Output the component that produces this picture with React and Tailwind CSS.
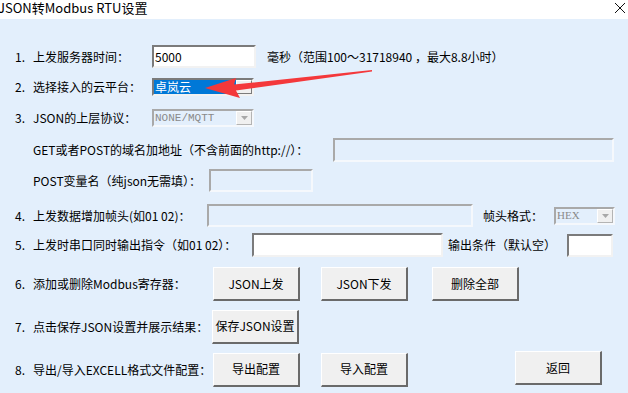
import React from "react";

const font = "font-['Noto_Sans_CJK_SC','Noto_Sans',sans-serif]";
const sunkenWhite =
  "border-2 border-t-[#7b7b7b] border-l-[#7b7b7b] border-b-[#f2f2f2] border-r-[#f2f2f2] bg-white";
const sunkenDisabled =
  "border-2 border-t-[#a9a9a9] border-l-[#a9a9a9] border-b-[#f5f8fc] border-r-[#f5f8fc] bg-[#e3effc]";

function Btn({ children, className = "" }) {
  return (
    <div
      className={`flex items-center justify-center w-[87px] h-[34px] bg-[#f0f0f0] border border-t-white border-l-white border-r-2 border-b-2 border-r-[#6a6a6a] border-b-[#6a6a6a] text-[12px] text-black ${className}`}
    >
      {children}
    </div>
  );
}

function Tri({ color }) {
  return (
    <svg width="7" height="4" viewBox="0 0 7 4">
      <polygon points="0,0 7,0 3.5,4" fill={color} />
    </svg>
  );
}

function Label({ num, children, w }) {
  return (
    <div className="flex items-center shrink-0" style={{ width: w }}>
      <span className="w-[18px] shrink-0">{num}</span>
      <span className="whitespace-nowrap">{children}</span>
    </div>
  );
}

export default function App() {
  return (
    <div className={`relative w-[628px] h-[393px] overflow-hidden bg-[#e3effc] ${font} text-[12px] text-black`}>
      <div className="h-[19px] bg-white flex items-start justify-between">
        <span className="text-[13px] leading-[15px] -ml-[2px] whitespace-nowrap">JSON转Modbus RTU设置</span>
        <svg width="12" height="12" viewBox="0 0 12 12" className="mr-[2px] mt-[2px]">
          <path d="M1 1 L11 11 M11 1 L1 11" stroke="#111" strokeWidth="1" />
        </svg>
      </div>

      <div className="flex flex-col pl-[15px]">
        {/* Row 1 */}
        <div className="flex items-center h-[23px] mt-[26px]">
          <Label num="1." w={137}>上发服务器时间：</Label>
          <div className={`w-[104px] h-[23px] ${sunkenWhite} flex items-center pl-[1px] text-[12px]`}>5000</div>
          <span className="ml-[11px] whitespace-nowrap">毫秒（范围100～31718940 ，最大8.8小时）</span>
        </div>

        {/* Row 2 */}
        <div className="flex items-center h-[18px] mt-[10px]">
          <Label num="2." w={137}>选择接入的云平台：</Label>
          <div className={`w-[102px] h-[18px] ${sunkenWhite} flex`}>
            <div className="flex-1 bg-[#0078d7] text-white flex items-center pl-[1px] leading-none">卓岚云</div>
            <div className="w-[16px] bg-[#f0f0f0] border border-t-white border-l-white border-r-[#7b7b7b] border-b-[#7b7b7b] flex items-center justify-center">
              <Tri color="#000" />
            </div>
          </div>
        </div>

        {/* Row 3 */}
        <div className="flex items-center h-[18px] mt-[13px]">
          <Label num="3." w={137}>JSON的上层协议：</Label>
          <div className={`w-[102px] h-[18px] ${sunkenDisabled} flex`}>
            <div className="flex-1 text-[#8a8a8a] flex items-center pl-[1px] leading-none font-['Liberation_Mono',monospace] text-[11px]">NONE/MQTT</div>
            <div className="w-[16px] bg-[#f0f0f0] border border-t-white border-l-white border-r-[#b4b4b4] border-b-[#b4b4b4] flex items-center justify-center">
              <Tri color="#a8a8a8" />
            </div>
          </div>
        </div>

        {/* GET row */}
        <div className="flex items-center h-[24px] mt-[11px]">
          <div className="w-[318px] shrink-0 pl-[18px] whitespace-nowrap">GET或者POST的域名加地址（不含前面的http://）：</div>
          <div className={`w-[281px] h-[24px] ${sunkenDisabled}`} />
        </div>

        {/* POST row */}
        <div className="flex items-center h-[23px] mt-[7px]">
          <div className="w-[194px] shrink-0 pl-[18px] whitespace-nowrap">POST变量名（纯json无需填）：</div>
          <div className={`w-[104px] h-[23px] ${sunkenDisabled}`} />
        </div>

        {/* Row 4 */}
        <div className="flex items-center h-[23px] mt-[12px]">
          <Label num="4." w={192}>上发数据增加帧头(如01 02)：</Label>
          <div className={`w-[266px] h-[23px] ${sunkenDisabled}`} />
          <span className="ml-[10px] w-[71px] shrink-0 whitespace-nowrap">帧头格式：</span>
          <div className={`w-[61px] h-[18px] ${sunkenDisabled} flex`}>
            <div className="flex-1 text-[#8a8a8a] flex items-center pl-[1px] leading-none font-['Liberation_Serif',serif] text-[11px]">HEX</div>
            <div className="w-[16px] bg-[#f0f0f0] border border-t-white border-l-white border-r-[#b4b4b4] border-b-[#b4b4b4] flex items-center justify-center">
              <Tri color="#a8a8a8" />
            </div>
          </div>
        </div>

        {/* Row 5 */}
        <div className="flex items-center h-[24px] mt-[6px]">
          <Label num="5." w={237}>上发时串口同时输出指令（如01 02）：</Label>
          <div className={`w-[191px] h-[24px] ${sunkenWhite}`} />
          <span className="ml-[5px] w-[119px] shrink-0 whitespace-nowrap">输出条件（默认空）</span>
          <div className={`w-[46px] h-[23px] ${sunkenWhite}`} />
        </div>

        {/* Row 6 */}
        <div className="flex items-center h-[34px] mt-[10px]">
          <Label num="6." w={198}>添加或删除Modbus寄存器：</Label>
          <Btn>JSON上发</Btn>
          <Btn className="ml-[21px]">JSON下发</Btn>
          <Btn className="ml-[24px] w-[86px]">删除全部</Btn>
        </div>

        {/* Row 7 */}
        <div className="flex items-center h-[33px] mt-[9px]">
          <Label num="7." w={197}>点击保存JSON设置并展示结果：</Label>
          <Btn className="h-[33px]">保存JSON设置</Btn>
        </div>

        {/* Row 8 */}
        <div className="flex items-center h-[33px] mt-[10px]">
          <Label num="8." w={198}>导出/导入EXCELL格式文件配置：</Label>
          <Btn className="h-[33px]">导出配置</Btn>
          <Btn className="h-[33px] ml-[21px]">导入配置</Btn>
          <Btn className="h-[33px] ml-[107px] -mt-[3px]">返回</Btn>
        </div>
      </div>

      <svg className="absolute left-0 top-0 pointer-events-none" width="628" height="393" viewBox="0 0 628 393">
        <polygon
          points="205,88 236,78 234,84.5 372,70 372,71.5 236,90.5 240,98"
          fill="#f4383b"
        />
      </svg>
    </div>
  );
}
